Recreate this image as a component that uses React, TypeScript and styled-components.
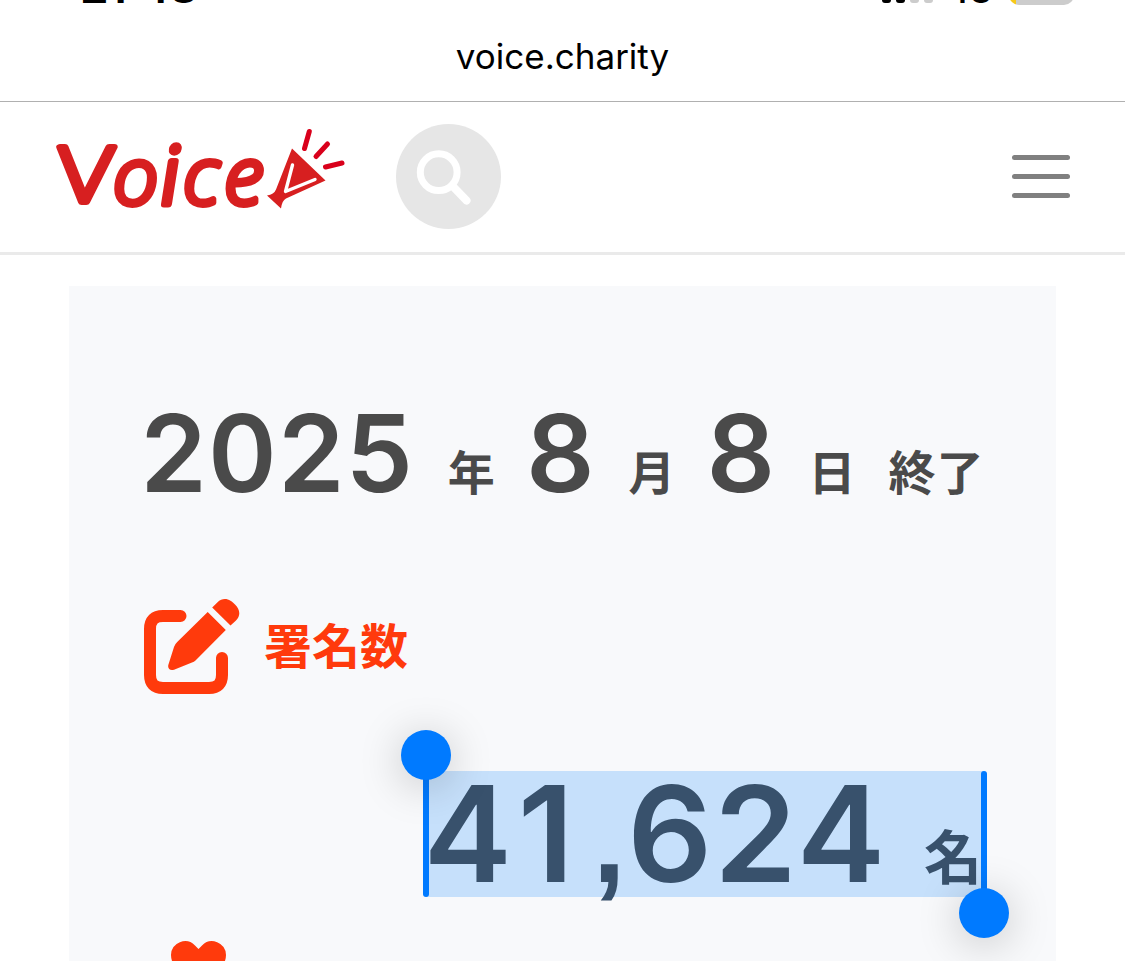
import styled, { createGlobalStyle } from "styled-components";

const GlobalStyle = createGlobalStyle`
  html,
  body {
    margin: 0;
    background: #fff;
    overflow: hidden;
  }

  * {
    box-sizing: border-box;
  }
`;

const Page = styled.div`
  width: 1125px;
  height: 961px;
  display: flex;
  flex-direction: column;
  overflow: hidden;
  background: #fff;
  color: #4a4a4a;
  font-family: Inter, "Noto Sans CJK JP", sans-serif;
`;

const BrowserTop = styled.div`
  flex: none;
  height: 102px;
  display: flex;
  flex-direction: column;
  border-bottom: 1px solid #b0b0b0;
  color: #000;
`;

const StatusBar = styled.div`
  flex: none;
  height: 8px;
  overflow: hidden;
  display: flex;
  justify-content: space-between;
  align-items: flex-end;
  padding: 0 51px 0 80px;
`;

const Clock = styled.span`
  font-size: 46px;
  font-weight: 600;
  line-height: 48px;
  letter-spacing: -1.1px;
  margin-bottom: -2px;

  i {
    font-style: normal;
    display: inline-block;
    transform: translateY(-8px);
  }
`;

const StatusIcons = styled.div`
  display: flex;
  align-items: flex-end;
`;

const SignalBar = styled.span<{ $on?: boolean }>`
  width: 9px;
  height: 20px;
  margin: 0 5px 5px 0;
  border-radius: 3px;
  background: ${({ $on }) => ($on ? "#000" : "#ccc")};
`;

const Network = styled.span`
  font-size: 33px;
  font-weight: 600;
  line-height: 34px;
  letter-spacing: -1px;
  margin: 0 17px 0 9px;
`;

const Battery = styled.span`
  width: 65px;
  height: 34px;
  margin-bottom: 3px;
  border-radius: 10px;
  background: linear-gradient(to right, #f7c918 7px, #ccc 7px);
`;

const Address = styled.div`
  text-align: center;
  font-size: 35px;
  line-height: 44px;
  margin-top: 26px;
`;

const Header = styled.header`
  flex: none;
  height: 153px;
  display: flex;
  align-items: center;
  padding: 0 55px 1px 50px;
  border-bottom: 3px solid #eaeaea;
`;

const SearchButton = styled.button`
  width: 105px;
  height: 105px;
  margin-left: 46px;
  padding: 0;
  border: 0;
  border-radius: 50%;
  background: #e6e6e6;

  svg {
    display: block;
  }
`;

const MenuButton = styled.button`
  margin-left: auto;
  padding: 0;
  border: 0;
  background: none;
  display: flex;
  flex-direction: column;
  gap: 14px;

  span {
    width: 58px;
    height: 5px;
    border-radius: 3px;
    background: #808080;
  }
`;

const Card = styled.main`
  width: 987px;
  height: 700px;
  margin: 31px auto 0;
  padding: 112px 72px 0 73px;
  background: #f8f9fb;
`;

const DateRow = styled.div`
  height: 110px;
  display: flex;
  align-items: baseline;
  gap: 32px;
  margin-left: -1px;
  line-height: 110px;
  white-space: nowrap;
`;

const DateNumber = styled.span`
  font-size: 107px;
  font-weight: 600;
  font-feature-settings: "tnum";
  letter-spacing: -0.4px;
  margin: 0 1.5px 0 -2px;
`;

const DateUnit = styled.span`
  font-family: "Noto Sans CJK JP", sans-serif;
  font-size: 47px;
  font-weight: 700;
  letter-spacing: 1px;
  transform: translateY(-2px);
`;

const SectionTitle = styled.h2`
  display: flex;
  align-items: center;
  gap: 24px;
  margin: 88px 0 0;
  height: 100px;
  color: #ff3a0c;
  font-family: "Noto Sans CJK JP", sans-serif;
  font-size: 48px;
  font-weight: 700;
  line-height: 96px;

  span {
    margin-bottom: 7px;
  }
`;

const Selection = styled.div`
  position: relative;
  width: 558px;
  height: 126px;
  margin: 75px 0 0 auto;
  display: flex;
  align-items: baseline;
  justify-content: space-between;
  background: #c6e0fb;
  color: #38516c;
  line-height: 126px;
`;

const Count = styled.span`
  font-size: 133px;
  font-weight: 600;
  font-feature-settings: "tnum";
  letter-spacing: -0.3px;
  margin-left: -1px;
  white-space: nowrap;
`;

// proportional "1" without a foot, kept in a full digit cell
const One = styled.span`
  display: inline-block;
  width: 86px;
  padding-right: 16px;
  font-feature-settings: normal;
  text-align: center;
`;

const Comma = styled.span`
  display: inline-block;
  width: 34px;
  margin-left: -4px;
  font-family: "Liberation Sans", sans-serif;
  font-size: 118px;
  font-weight: 700;
`;

const CountUnit = styled.span`
  font-family: "Noto Sans CJK JP", sans-serif;
  font-size: 58px;
  font-weight: 700;
  margin-right: 2px;
  transform: translateY(-3px);
`;

const Handle = styled.span<{ $end?: boolean }>`
  position: absolute;
  top: 0;
  ${({ $end }) => ($end ? "right" : "left")}: -3px;
  width: 6px;
  height: 126px;
  border-radius: 3px;
  background: #007aff;

  &::after {
    content: "";
    position: absolute;
    left: -22px;
    top: ${({ $end }) => ($end ? "117px" : "-41px")};
    width: 50px;
    height: 50px;
    border-radius: 50%;
    background: #007aff;
    box-shadow: 0 6px 44px rgba(0, 0, 0, 0.22);
  }
`;

const HeartIcon = styled.svg`
  display: block;
  margin: 42px 0 0 28px;
`;

const Logo = () => (
  <svg width="300" height="100" viewBox="50 126.5 300 100">
    <g
      fontFamily="Open Sans"
      fontWeight="300"
      fill="#d71f20"
      stroke="#d71f20"
      strokeLinejoin="round"
      strokeWidth="6"
    >
      <text
        fontSize="77"
        transform="translate(57 201.5) skewX(-3) scale(1.22 1)"
      >
        V
      </text>
      <text x="113" y="203.5" fontSize="80" fontStyle="italic">
        o
      </text>
      <text
        fontSize="80"
        strokeWidth="7"
        transform="translate(157.5 203) skewX(-9)"
      >
        i
      </text>
      <text x="183 224" y="203.5" fontSize="80" fontStyle="italic">
        ce
      </text>
    </g>
    <path
      d="M292 148 325.5 180 286 198Q282 200 281 208L267 195Q274 194 276 189Z"
      fill="#d71f20"
    />
    <path
      d="M292.5 164.5 285.5 191 315 179"
      fill="none"
      stroke="#fff"
      strokeWidth="3.4"
      strokeLinecap="round"
      strokeLinejoin="round"
    />
    <path
      d="M309.3 131 304.5 148M327.5 143.5 316 156M342 162.5 325.5 166.5"
      stroke="#d9001b"
      strokeWidth="5"
      strokeLinecap="round"
    />
  </svg>
);

const PenIcon = () => (
  <svg width="98" height="100" viewBox="142 596 98 100">
    <path
      d="M180.5 616H163Q150 616 150 629V675Q150 688 163 688H209Q222 688 222 675V658"
      fill="none"
      stroke="#ff3a0c"
      strokeWidth="12"
      strokeLinecap="round"
    />
    <path
      d="M212.2 607.5 217.3 602.5C224 596 231 600 235 604.5C240 609.5 241 615.5 236 620.5L230.5 625.5ZM207.7 612 225.8 630 195.5 660.5Q194 662 192 662.5L174 669.7C170 671 167.5 668.5 168.3 665L174 647Q175 644 177.2 642Z"
      fill="#ff3a0c"
    />
  </svg>
);

const DATE_PARTS = [
  { value: "2025", unit: "年" },
  { value: "8", unit: "月" },
  { value: "8", unit: "日" },
];

const App = () => {
  return (
    <Page>
      <GlobalStyle />
      <BrowserTop>
        <StatusBar>
          <Clock>
            21<i>:</i>48
          </Clock>
          <StatusIcons>
            <SignalBar $on />
            <SignalBar $on />
            <SignalBar />
            <SignalBar />
            <Network>4G</Network>
            <Battery />
          </StatusIcons>
        </StatusBar>
        <Address>voice.charity</Address>
      </BrowserTop>
      <Header>
        <Logo />
        <SearchButton aria-label="search">
          <svg width="105" height="105" fill="none" stroke="#fff">
            <circle cx="42.7" cy="48.2" r="18.4" strokeWidth="7" />
            <path d="M57 62.5 70.5 76.5" strokeWidth="8" strokeLinecap="round" />
          </svg>
        </SearchButton>
        <MenuButton aria-label="menu">
          <span />
          <span />
          <span />
        </MenuButton>
      </Header>
      <Card>
        <DateRow>
          {DATE_PARTS.map(({ value, unit }) => [
            <DateNumber key={unit + "n"}>{value}</DateNumber>,
            <DateUnit key={unit}>{unit}</DateUnit>,
          ])}
          <DateUnit>終了</DateUnit>
        </DateRow>
        <SectionTitle>
          <PenIcon />
          <span>署名数</span>
        </SectionTitle>
        <Selection>
          <Count>
            4<One>1</One>
            <Comma>,</Comma>624
          </Count>
          <CountUnit>名</CountUnit>
          <Handle />
          <Handle $end />
        </Selection>
        <HeartIcon width="57" height="50" viewBox="0 0 57 50">
          <path
            d="M28.5 10 25 6.5A14 14 0 0 0 1 16C1 29 15 39 28.5 50C42 39 56 29 56 16A14 14 0 0 0 32 6.5Z"
            fill="#ff3a0c"
          />
        </HeartIcon>
      </Card>
    </Page>
  );
};

export default App;
